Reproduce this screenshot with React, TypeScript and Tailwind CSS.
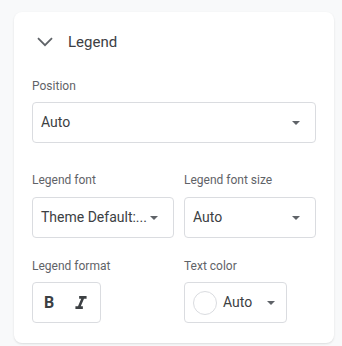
import React from "react";

function Caret() {
  return (
    <svg width="8" height="4" viewBox="0 0 8 4" className="shrink-0">
      <path d="M0 0 L8 0 L4 4 Z" fill="#5f6368" />
    </svg>
  );
}

function Select({ value, className = "" }: { value: string; className?: string }) {
  return (
    <div className={`flex h-[41px] items-center rounded-[4px] border border-[#dadce0] bg-white pl-[8px] pr-[15px] ${className}`}>
      <span className="min-w-0 flex-1 whitespace-nowrap text-[14px] text-[#3c4043]">{value}</span>
      <Caret />
    </div>
  );
}

function Label({ children }: { children: React.ReactNode }) {
  return <div className="text-[12px] leading-[16px] text-[#5f6368]">{children}</div>;
}

export default function App() {
  return (
    <div className="h-[346px] w-[342px] bg-[#f8f9fa] pl-[14px] pt-[12px]" style={{ fontFamily: "Roboto, 'Liberation Sans', sans-serif" }}>
      <div className="h-[331px] w-[320px] rounded-[8px] bg-white px-[18px] shadow-[0_1px_2px_rgba(60,64,67,0.15)]">
        <div className="flex h-[60px] items-center gap-[15px] pl-[5px]">
          <svg width="16" height="10" viewBox="0 0 16 10">
            <path d="M1 1.2 L8 8.2 L15 1.2" fill="none" stroke="#5f6368" strokeWidth="1.8" />
          </svg>
          <span className="text-[15px] text-[#3c4043]">Legend</span>
        </div>

        <div className="mt-[6px]">
          <Label>Position</Label>
          <Select value="Auto" className="mt-[8px] w-[284px]" />
        </div>

        <div className="mt-[29px] grid grid-cols-[142px_132px] gap-x-[10px]">
          <div>
            <Label>Legend font</Label>
            <Select value="Theme Default:..." className="mt-[9px] pr-[12px]" />
          </div>
          <div>
            <Label>Legend font size</Label>
            <Select value="Auto" className="mt-[9px]" />
          </div>
        </div>

        <div className="mt-[20px] grid grid-cols-[142px_132px] gap-x-[10px]">
          <div>
            <Label>Legend format</Label>
            <div className="mt-[8px] flex h-[41px] w-[69px] items-center gap-[21px] rounded-[4px] border border-[#dadce0] pl-[11px]">
              <span className="text-[16px] font-bold leading-none text-[#3c4043]">B</span>
              <svg width="12" height="13" viewBox="6 4 12 14">
                <path d="M10 4v3h2.21l-3.42 8H6v3h8v-3h-2.21l3.42-8H18V4z" fill="#3c4043" />
              </svg>
            </div>
          </div>
          <div>
            <Label>Text color</Label>
            <div className="mt-[8px] flex h-[41px] w-[103px] items-center rounded-[4px] border border-[#dadce0] pl-[8px]">
              <span className="h-[24px] w-[24px] rounded-full border border-[#dadce0]" />
              <span className="ml-[6px] text-[14px] text-[#3c4043]">Auto</span>
              <span className="ml-[15px]">
                <Caret />
              </span>
            </div>
          </div>
        </div>
      </div>
    </div>
  );
}
